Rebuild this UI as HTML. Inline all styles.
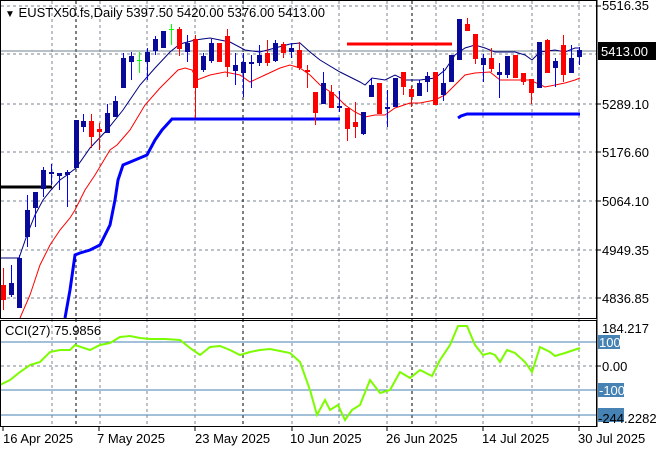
<!DOCTYPE html><html><head><meta charset="utf-8"><style>
html,body{margin:0;padding:0;background:#fff;width:660px;height:450px;overflow:hidden}
svg{display:block;font-family:"Liberation Sans",sans-serif;font-size:13px}
</style></head><body>
<svg id="s" width="660" height="450" xmlns="http://www.w3.org/2000/svg">
<rect width="660" height="450" fill="#fff"/>
<g id="grid" stroke="#7a8590" stroke-dasharray="3,3" stroke-width="1">
<line x1="1" y1="54" x2="596" y2="54"/><line x1="1" y1="104" x2="596" y2="104"/><line x1="1" y1="152" x2="596" y2="152"/><line x1="1" y1="201" x2="596" y2="201"/><line x1="1" y1="250" x2="596" y2="250"/><line x1="1" y1="298" x2="596" y2="298"/><line x1="1" y1="6" x2="596" y2="6"/>
<line x1="1" y1="366" x2="596" y2="366"/>
</g>
<g id="vg" stroke="#7a8590" stroke-dasharray="3,3"></g>
<g stroke="#000" stroke-dasharray="3,3">
<line x1="76" y1="1" x2="76" y2="426"/><line x1="243" y1="1" x2="243" y2="426"/><line x1="412" y1="1" x2="412" y2="426"/>
</g>
<line x1="1" y1="51" x2="596" y2="51" stroke="#708090"/>
<g stroke="#4682b4"><line x1="1" y1="342" x2="596" y2="342"/><line x1="1" y1="390" x2="596" y2="390"/><line x1="1" y1="415" x2="596" y2="415"/></g>
<line x1="0" y1="187" x2="52" y2="187" stroke="#000" stroke-width="3"/>
<line x1="347" y1="44" x2="452" y2="44" stroke="#f00" stroke-width="3"/>
<polyline fill="none" stroke="#0000ff" stroke-width="3" points="65,318 70,290 75,255 80,253 90,250 100,245 110,225 115,200 118,180 123,165 135,160 147,155 155,140 162,130 172,119 340,119"/>
<polyline fill="none" stroke="#0000ff" stroke-width="3" points="458,118 461,116 467,114 580,114"/>
<polyline fill="none" stroke="#000080" stroke-width="1" points="0,258 19,258 27,235 35,215 43,200 51,190 60,180 67,175 76,168 90,148 107,130 123,110 140,85 155,68 170,52 180,44 195,40 210,38 230,42 245,50 260,52 275,48 290,44 300,43 310,52 320,60 340,72 360,82 365,85 372,78 385,80 395,75 405,80 420,80 435,78 445,70 455,55 465,48 475,45 485,48 495,52 515,52 525,55 532,60 540,52 555,50 565,52 575,48 580,48"/>
<polyline fill="none" stroke="#f00" stroke-width="1" points="20,318 30,295 40,265 50,245 60,230 70,218 75,210 85,190 95,175 110,150 117,145 130,130 145,105 160,88 170,78 178,70 185,68 192,70 197,80 210,75 225,72 240,75 250,82 265,75 280,68 290,65 300,68 310,75 320,85 335,95 345,105 355,112 365,117 375,115 385,115 395,108 410,103 420,103 435,100 445,95 455,85 465,75 475,73 490,72 500,80 530,80 545,87 555,85 565,83 575,80 580,78"/>
<g id="c"></g>
<polyline fill="none" stroke="#7cfc00" stroke-width="2" points="0,385 10,380 20,372 30,365 40,362 50,352 60,350 70,350 75,345 90,350 100,345 110,343 120,337 130,336 140,338 150,339 165,339 180,340 190,348 200,355 210,347 220,346 230,350 240,355 250,352 260,350 270,349 280,351 290,353 300,362 310,390 317,415 325,400 330,410 338,405 345,420 352,410 360,405 370,380 380,393 390,390 400,372 410,378 420,370 432,376 440,360 450,345 458,326 467,326 475,345 483,355 490,353 495,355 500,362 507,350 515,353 525,362 532,372 540,347 550,352 555,356 565,353 580,348"/>
<rect x="0.5" y="0.5" width="596" height="318" fill="none" stroke="#000"/>
<rect x="0.5" y="320.5" width="596" height="106" fill="none" stroke="#000"/>
<line x1="597" y1="0" x2="597" y2="427" stroke="#000" stroke-width="1"/>
<text x="5" y="17" fill="#000"><tspan font-size="10">▼</tspan> EUSTX50.fs,Daily  5397.50 5420.00 5376.00 5413.00</text>
<text x="5" y="335" fill="#000">CCI(27) 75.9856</text>
<g fill="#000">
<text x="602" y="10">5516.35</text>
<text x="602" y="109">5289.10</text>
<text x="602" y="157">5176.60</text>
<text x="602" y="206">5064.10</text>
<text x="602" y="255">4949.35</text>
<text x="602" y="303">4836.85</text>
<text x="602" y="333">184.217</text>
<text x="602" y="371">0.00</text>
</g>
<rect x="598" y="42" width="58" height="18" fill="#000"/>
<text x="601" y="56" fill="#fff" font-size="13">5413.00</text>
<rect x="598" y="335" width="22" height="14" fill="#4682b4"/><text x="599" y="347" fill="#fff">100</text>
<rect x="598" y="383" width="26" height="14" fill="#4682b4"/><text x="599" y="395" fill="#fff">-100</text>
<rect x="598" y="408" width="26" height="14" fill="#4682b4"/><text x="598" y="423" fill="#000">-244.2282</text>
<g stroke="#000"><line x1="597" y1="6" x2="601" y2="6"/><line x1="597" y1="104" x2="601" y2="104"/><line x1="597" y1="152" x2="601" y2="152"/><line x1="597" y1="201" x2="601" y2="201"/><line x1="597" y1="250" x2="601" y2="250"/><line x1="597" y1="298" x2="601" y2="298"/><line x1="597" y1="366" x2="601" y2="366"/></g>
<g stroke="#000"><line x1="3" y1="427" x2="3" y2="431"/><line x1="99" y1="427" x2="99" y2="431"/><line x1="195" y1="427" x2="195" y2="431"/><line x1="292" y1="427" x2="292" y2="431"/><line x1="387" y1="427" x2="387" y2="431"/><line x1="483" y1="427" x2="483" y2="431"/><line x1="579" y1="427" x2="579" y2="431"/></g>
<g fill="#000">
<text x="3" y="443">16 Apr 2025</text><text x="97" y="443">7 May 2025</text><text x="195" y="443">23 May 2025</text><text x="290" y="443">10 Jun 2025</text><text x="386" y="443">26 Jun 2025</text><text x="482" y="443">14 Jul 2025</text><text x="578" y="443">30 Jul 2025</text>
</g>
</svg>
<script>
var ns="http://www.w3.org/2000/svg";
function el(p,t,a){var e=document.createElementNS(ns,t);for(var k in a)e.setAttribute(k,a[k]);p.appendChild(e);return e;}
var vg=document.getElementById('vg');
[52,100,147,195,292,339,387,436,483,532,579].forEach(function(x){el(vg,'line',{x1:x,y1:1,x2:x,y2:426});});
var C=[[3,285,300,268,310,'r'],[11,283,295,265,297,'b'],[19,258,308,255,308,'b'],[27,210,237,195,247,'b'],[35,192,208,192,227,'b'],[43,170,189,167,197,'b'],[51,172,174,164,185,'b'],[59,173,176,173,190,'b'],[67,172,175,170,207,'b'],[76,120,168,120,168,'b'],[83,121,127,114,132,'b'],[91,121,137,114,148,'r'],[99,129,132,123,150,'r'],[107,113,133,104,133,'b'],[115,101,117,96,117,'b'],[123,58,88,53,88,'b'],[131,56,62,52,80,'b'],[139,60,60,52,73,'g'],[147,52,62,48,80,'b'],[155,39,51,36,55,'b'],[163,31,48,31,48,'b'],[171,29,29,24,45,'g'],[179,29,49,27,56,'r'],[187,43,52,35,62,'b'],[195,39,88,35,118,'r'],[203,56,70,53,72,'b'],[211,43,61,39,63,'b'],[219,43,62,43,62,'r'],[227,36,67,29,77,'r'],[235,65,71,53,85,'b'],[243,62,73,53,97,'b'],[251,62,64,55,88,'b'],[259,55,63,45,66,'b'],[267,53,63,40,66,'r'],[275,43,61,40,62,'b'],[283,44,53,42,58,'r'],[291,48,52,43,58,'b'],[299,50,68,42,70,'r'],[307,70,72,65,88,'r'],[315,92,113,92,125,'r'],[323,83,104,72,104,'b'],[331,92,108,85,108,'r'],[339,106,108,91,112,'b'],[347,108,129,108,141,'r'],[355,122,127,102,138,'r'],[363,112,134,112,135,'b'],[371,85,97,78,97,'b'],[379,83,114,83,114,'r'],[387,107,109,90,127,'b'],[395,78,107,78,107,'b'],[403,72,87,72,95,'r'],[411,89,97,86,107,'r'],[419,83,96,80,96,'b'],[427,76,82,72,92,'b'],[435,72,105,72,105,'r'],[443,83,95,68,101,'b'],[451,55,82,55,82,'b'],[459,19,60,19,60,'b'],[467,24,31,18,31,'r'],[475,34,59,34,64,'r'],[483,58,65,54,82,'b'],[491,58,69,48,72,'r'],[499,72,75,63,98,'b'],[507,56,75,56,78,'b'],[515,55,78,55,78,'r'],[523,73,82,73,85,'r'],[531,79,93,79,104,'r'],[539,42,88,42,88,'b'],[547,40,73,39,73,'r'],[555,61,68,58,87,'b'],[563,45,75,35,82,'r'],[571,58,73,45,73,'b'],[579,50,57,47,65,'b']];
var g=document.getElementById('c');
C.forEach(function(c){var x=c[0],wc=c[5]=='r'?'#ff0000':(c[5]=='g'?'#00ff00':'#0000ff'),bc=c[5]=='r'?'#ff0000':(c[5]=='g'?'#00ff00':'#0a0a9a');
el(g,'line',{x1:x+0.5,y1:c[3],x2:x+0.5,y2:c[4],stroke:wc});
var h=Math.max(1,c[2]-c[1]);el(g,'rect',{x:x-2,y:c[1],width:5,height:h,fill:bc});});
</script>
</body></html>
